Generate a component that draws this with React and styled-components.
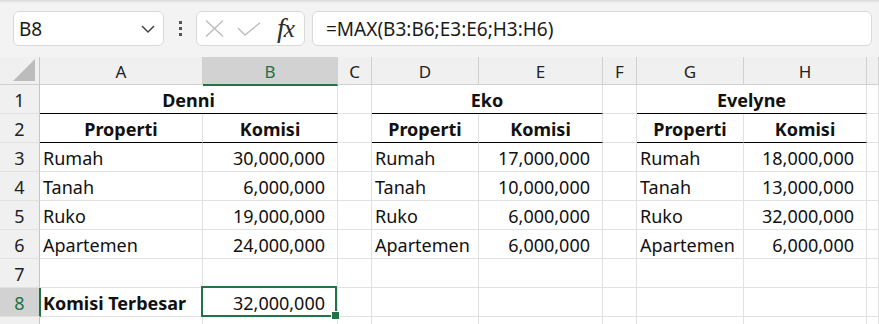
import React from "react";
import styled, { createGlobalStyle } from "styled-components";

const GREEN = "#217346";
const GRID = "#e1e1e1";
const HEAD_LINE = "#d0d0d0";

const GlobalStyle = createGlobalStyle`
  html, body {
    margin: 0;
    background: #ffffff;
    overflow: hidden;
  }
  * {
    box-sizing: border-box;
  }
`;

const columns = ["A", "B", "C", "D", "E", "F", "G", "H", ""];

const groups = [
  {
    name: "Denni",
    rows: [
      ["Rumah", "30,000,000"],
      ["Tanah", "6,000,000"],
      ["Ruko", "19,000,000"],
      ["Apartemen", "24,000,000"],
    ],
  },
  {
    name: "Eko",
    rows: [
      ["Rumah", "17,000,000"],
      ["Tanah", "10,000,000"],
      ["Ruko", "6,000,000"],
      ["Apartemen", "6,000,000"],
    ],
  },
  {
    name: "Evelyne",
    rows: [
      ["Rumah", "18,000,000"],
      ["Tanah", "13,000,000"],
      ["Ruko", "32,000,000"],
      ["Apartemen", "6,000,000"],
    ],
  },
];

export default function App() {
  return (
    <>
      <GlobalStyle />
      <Window>
        <Toolbar>
          <NameBox>
            <span>B8</span>
            <svg width="16" height="10" viewBox="0 0 16 10">
              <path d="M2 2 L8 8 L14 2" fill="none" stroke="#444" strokeWidth="1.5" />
            </svg>
          </NameBox>
          <Grip>
            <i />
            <i />
            <i />
          </Grip>
          <FxGroup>
            <svg width="19" height="17" viewBox="0 0 19 17">
              <path d="M1 0.5 L18 16.5 M18 0.5 L1 16.5" stroke="#bdbdbd" strokeWidth="1.4" />
            </svg>
            <svg width="24" height="14" viewBox="0 0 24 14">
              <path d="M1 6 L8 13 L23 0.8" fill="none" stroke="#bdbdbd" strokeWidth="1.4" />
            </svg>
            <FxLabel>
              f<span>x</span>
            </FxLabel>
          </FxGroup>
          <FormulaBox>=MAX(B3:B6;E3:E6;H3:H6)</FormulaBox>
        </Toolbar>

        <Sheet>
          <Corner>
            <svg width="22" height="22" viewBox="0 0 22 22">
              <path d="M22 0 L22 22 L0 22 Z" fill="#bcbcbc" />
            </svg>
          </Corner>
          {columns.map((c, i) => (
            <ColHead key={i} $active={c === "B"}>
              {c}
            </ColHead>
          ))}

          {/* row 1: merged names */}
          <RowHead>1</RowHead>
          {groups.map((g) => (
            <React.Fragment key={g.name}>
              <Cell $span={2} $align="center" $bold $edge>
                {g.name}
              </Cell>
              <Cell />
            </React.Fragment>
          ))}

          {/* row 2: column titles */}
          <RowHead>2</RowHead>
          {groups.map((g) => (
            <React.Fragment key={g.name}>
              <Cell $align="center" $bold $edge>
                Properti
              </Cell>
              <Cell $align="center" $bold $edge>
                Komisi
              </Cell>
              <Cell />
            </React.Fragment>
          ))}

          {[0, 1, 2, 3].map((r) => (
            <React.Fragment key={r}>
              <RowHead>{r + 3}</RowHead>
              {groups.map((g) => (
                <React.Fragment key={g.name}>
                  <Cell>{g.rows[r][0]}</Cell>
                  <Cell $align="right">{g.rows[r][1]}</Cell>
                  <Cell />
                </React.Fragment>
              ))}
            </React.Fragment>
          ))}

          <RowHead>7</RowHead>
          {columns.map((_, i) => (
            <Cell key={i} />
          ))}

          <RowHead $active>8</RowHead>
          <Cell $bold>Komisi Terbesar</Cell>
          <Cell $align="right">
            32,000,000
            <Selection />
            <FillHandle />
          </Cell>
          {columns.slice(2).map((_, i) => (
            <Cell key={i} />
          ))}

          {/* row 9 only peeks in at the bottom edge */}
          <RowHead />
          {columns.map((_, i) => (
            <Cell key={i} />
          ))}
        </Sheet>
      </Window>
    </>
  );
}

const Window = styled.div`
  width: 879px;
  height: 324px;
  overflow: hidden;
  background: #ffffff;
`;

const Toolbar = styled.div`
  height: 57px;
  display: flex;
  align-items: flex-start;
  padding: 11px 7px 0 13px;
  background: #f3f3f3;
  box-shadow: inset 0 3px 3px -2px rgba(0, 0, 0, 0.14);
  font-family: "Noto Sans", "Liberation Sans", sans-serif;
`;

const Box = styled.div`
  height: 35px;
  display: flex;
  align-items: center;
  background: #ffffff;
  border: 1px solid #d9d9d9;
  border-radius: 6px;
`;

const NameBox = styled(Box)`
  width: 151px;
  justify-content: space-between;
  padding: 0 7px 0 5px;
  font-size: 19px;
  color: #1a1a1a;

  svg {
    margin-top: 1px;
  }
`;

const Grip = styled.div`
  width: 32px;
  height: 35px;
  display: flex;
  flex-direction: column;
  align-items: center;
  justify-content: center;
  gap: 3px;

  i {
    width: 3px;
    height: 3px;
    background: #555555;
  }
`;

const FxGroup = styled(Box)`
  width: 109px;
  padding: 0 6px 0 8px;
  gap: 13px;
`;

const FxLabel = styled.span`
  font-family: "Liberation Serif", "DejaVu Serif", serif;
  font-style: italic;
  font-size: 28px;
  line-height: 1;
  color: #2b2b2b;
  margin: -2px 0 0 3px;
  letter-spacing: -1px;

  span {
    font-size: 25px;
  }
`;

const FormulaBox = styled(Box)`
  flex: 1;
  margin-left: 7px;
  padding-left: 13px;
  font-size: 19px;
  color: #1a1a1a;
`;

const Sheet = styled.div`
  display: grid;
  grid-template-columns: 40px 163px 135px 34px 107px 124px 34px 107px 123px 1fr;
  grid-template-rows: 28px;
  grid-auto-rows: 29px;
  font-family: "Noto Sans", "Liberation Sans", sans-serif;
  font-size: 18px;
  color: #111111;
`;

const Corner = styled.div`
  background: #f0f0f0;
  border-right: 1px solid #c6c6c6;
  border-bottom: 1px solid ${HEAD_LINE};
  display: flex;
  align-items: flex-end;
  justify-content: flex-end;
  padding: 0 4px 3px 0;
`;

const ColHead = styled.div`
  display: flex;
  align-items: center;
  justify-content: center;
  padding-top: 1px;
  font-size: 17px;
  background: ${(p) => (p.$active ? "#d2d2d2" : "#f0f0f0")};
  color: ${(p) => (p.$active ? GREEN : "#222222")};
  border-right: 1px solid ${HEAD_LINE};
  border-bottom: ${(p) => (p.$active ? `2px solid ${GREEN}` : `1px solid ${HEAD_LINE}`)};
  margin-bottom: ${(p) => (p.$active ? "-1px" : "0")};
  position: relative;
  z-index: ${(p) => (p.$active ? 1 : 0)};
`;

const RowHead = styled.div`
  display: flex;
  align-items: center;
  justify-content: center;
  padding-top: 1px;
  background: ${(p) => (p.$active ? "#d2d2d2" : "#f0f0f0")};
  color: ${(p) => (p.$active ? GREEN : "#222222")};
  border-right: ${(p) => (p.$active ? `2px solid ${GREEN}` : "1px solid #c6c6c6")};
  margin-right: ${(p) => (p.$active ? "-1px" : "0")};
  border-bottom: 1px solid ${GRID};
  position: relative;
  z-index: ${(p) => (p.$active ? 1 : 0)};
`;

const Cell = styled.div`
  position: relative;
  grid-column: ${(p) => (p.$span ? `span ${p.$span}` : "auto")};
  display: flex;
  align-items: center;
  justify-content: ${(p) =>
    p.$align === "center" ? "center" : p.$align === "right" ? "flex-end" : "flex-start"};
  padding: 2px ${(p) => (p.$align === "right" ? "12px" : "3px")} 0 3px;
  font-weight: ${(p) => (p.$bold ? 700 : 400)};
  white-space: nowrap;
  border-right: 1px solid ${GRID};
  border-bottom: 1px solid ${(p) => (p.$edge ? "#000000" : GRID)};
`;

const Selection = styled.span`
  position: absolute;
  top: -2px;
  left: -2px;
  right: 0;
  bottom: -1px;
  border: 2px solid ${GREEN};
  z-index: 2;
  pointer-events: none;
`;

const FillHandle = styled.span`
  position: absolute;
  right: -2px;
  bottom: -3px;
  width: 7px;
  height: 7px;
  background: ${GREEN};
  box-shadow: 0 0 0 1px #ffffff;
  z-index: 3;
`;
